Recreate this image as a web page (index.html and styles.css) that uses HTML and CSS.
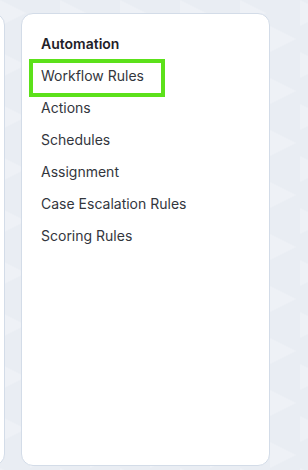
FILE: index.html
```html
<!DOCTYPE html>
<html>
<head>
<meta charset="utf-8">
<link rel="stylesheet" href="styles.css">
</head>
<body>
<div class="stage">
  <div class="card card-prev"></div>
  <div class="card card-main">
    <div class="group-title">Automation</div>
    <ul class="menu">
      <li class="menu-item is-highlight">Workflow Rules</li>
      <li class="menu-item">Actions</li>
      <li class="menu-item">Schedules</li>
      <li class="menu-item">Assignment</li>
      <li class="menu-item">Case Escalation Rules</li>
      <li class="menu-item">Scoring Rules</li>
    </ul>
  </div>
</div>
</body>
</html>
```
FILE: styles.css
```css
html, body {
  margin: 0;
  padding: 0;
}
body {
  width: 308px;
  height: 470px;
  overflow: hidden;
  background-color: #e9edf3;
  background-image: url("data:image/svg+xml;utf8,<svg xmlns='http://www.w3.org/2000/svg' width='60' height='52'><path d='M0 0 L26 13 L0 26 Z' fill='%23eef1f6'/><path d='M30 26 L56 39 L30 52 Z' fill='%23eef1f6'/></svg>");
  font-family: Inter, "Noto Sans", sans-serif;
}
.stage {
  display: flex;
  gap: 16px;
  padding-top: 13px;
}
.card {
  flex: none;
  height: 453px;
  box-sizing: border-box;
  background: #ffffff;
  border: 1px solid #d3dce8;
  border-radius: 12px;
}
.card-prev {
  width: 200px;
  margin-left: -195px;
}
.card-main {
  width: 249px;
  padding: 21px 8px 0 8px;
}
.group-title {
  font-size: 14px;
  font-weight: 600;
  color: #1f2229;
  line-height: 18px;
  padding-left: 11px;
  margin-bottom: 7px;
}
.menu {
  list-style: none;
  margin: 0;
  padding: 0;
}
.menu-item {
  font-size: 14px;
  color: #33363d;
  line-height: 32px;
  height: 32px;
  padding-left: 11px;
}
.is-highlight {
  position: relative;
}
.is-highlight::after {
  content: "";
  position: absolute;
  left: -1px;
  top: -1px;
  width: 136px;
  height: 38px;
  box-sizing: border-box;
  border: 4px solid #5ce11a;
}
```
